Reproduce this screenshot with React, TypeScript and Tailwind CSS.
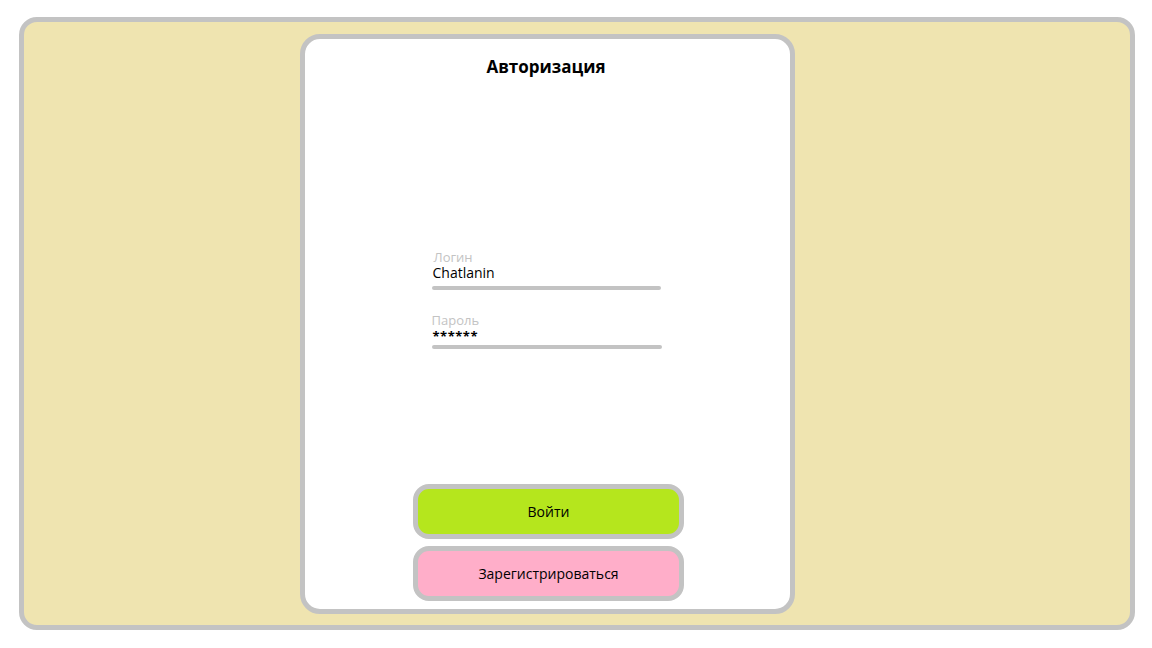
import React from "react";

export default function App() {
  return (
    <div
      className="w-[1152px] h-[648px] bg-white pt-[17px] pl-[19px]"
      style={{ fontFamily: '"Open Sans", "Noto Sans", sans-serif' }}
    >
      <div className="w-[1116px] h-[613px] bg-[#efe4b0] border-[5px] border-[#c3c3c3] rounded-[18px] pt-[12px] pl-[276px]">
        <div className="w-[495px] h-[580px] bg-white border-[5px] border-[#c3c3c3] rounded-[20px] flex flex-col items-center pt-[16px] pb-[8px]">
          <h1 className="text-[17px] leading-[24px] font-bold text-black ml-[-3px]">Авторизация</h1>

          <div className="w-[230px] mt-[170px] ml-[-2px] flex flex-col">
            <span className="text-[13px] leading-[16px] text-[#c3c3c3] pl-[2px]">Логин</span>
            <span className="text-[14px] leading-[16px] text-black pl-[1px]">Chatlanin</span>
            <div className="h-[4px] w-[229px] bg-[#c3c3c3] rounded-full mt-[5px]" />

            <span className="text-[13px] leading-[14px] text-[#c3c3c3] mt-[23px]">Пароль</span>
            <span className="text-[13px] leading-[13px] text-black pl-[1px] pt-[3px] font-bold tracking-[0.5px]">******</span>
            <div className="h-[4px] w-[230px] bg-[#c3c3c3] rounded-full mt-[2px]" />
          </div>

          <div className="mt-auto flex flex-col gap-[7px] ml-[2px]">
            <button className="w-[271px] h-[55px] bg-[#b5e61d] border-[5px] border-[#c3c3c3] rounded-[16px] text-[14px] text-black flex items-center justify-center">
              Войти
            </button>
            <button className="w-[271px] h-[55px] bg-[#ffaec9] border-[5px] border-[#c3c3c3] rounded-[16px] text-[14px] text-black flex items-center justify-center">
              Зарегистрироваться
            </button>
          </div>
        </div>
      </div>
    </div>
  );
}
